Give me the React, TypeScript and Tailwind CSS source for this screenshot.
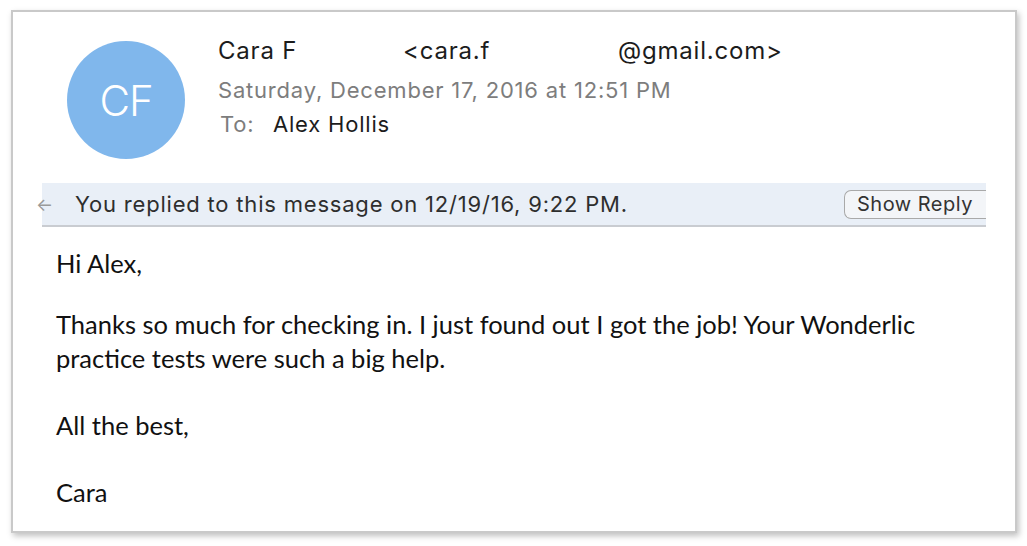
import React from 'react';

const head = { fontFamily: 'Inter, "Liberation Sans", Arial, sans-serif' };
const body = { fontFamily: 'Lato, "Open Sans", sans-serif' };

export default function App() {
  return (
    <div className="w-[1027px] h-[546px] bg-white overflow-hidden pt-[10px] pl-[11px]">
      <div className="relative w-[1006px] h-[523px] bg-white border-2 border-[#c9c9c9] shadow-[2px_3px_6px_rgba(0,0,0,0.25)]">
        {/* Header */}
        <div className="flex pl-[54px] pt-[29px]" style={head}>
          <div className="w-[118px] h-[118px] rounded-full bg-[#80b7ec] flex items-center justify-center text-white text-[42px] font-light tracking-tight">
            CF
          </div>
          <div className="ml-[33px] -mt-[5px] text-[#1c1c1c]">
            <div className="flex text-[24px] leading-[30px] tracking-[0.8px]">
              <span className="w-[185px]">Cara F</span>
              <span className="w-[215px]">&lt;cara.f</span>
              <span>@gmail.com&gt;</span>
            </div>
            <div className="text-[22px] leading-[29px] tracking-[0.8px] text-[#7d7d7d] mt-[10px]">
              Saturday, December 17, 2016 at 12:51 PM
            </div>
            <div className="text-[22px] leading-[29px] tracking-[0.8px] flex mt-[5px] pl-[2px]">
              <span className="text-[#7d7d7d] w-[53px]">To:</span>
              <span>Alex Hollis</span>
            </div>
          </div>
        </div>

        {/* Replied banner */}
        <div
          className="mt-[24px] ml-[29px] w-[944px] h-[44px] bg-[#e9eff7] border-b-2 border-[#c9ccd1] flex items-center"
          style={head}
        >
          <span className="text-[#9a9a9a] text-[18px] w-[39px] -ml-[6px]">&larr;</span>
          <span className="text-[22px] tracking-[0.8px] text-[#2e2e2e]">You replied to this message on 12/19/16, 9:22 PM.</span>
          <div className="ml-auto h-[29px] w-[142px] rounded-l-[7px] border border-r-0 border-[#a9a9a9] bg-[#f3f5f8] flex items-center pl-[12px] text-[20px] tracking-[0.5px] text-[#333]">
            Show Reply
          </div>
        </div>

        {/* Body */}
        <div className="pl-[43px] pt-[20px] text-[25.5px] leading-[33.5px] text-[#111]" style={body}>
          <div>Hi Alex,</div>
          <div className="h-[27.5px]" />
          <div>Thanks so much for checking in. I just found out I got the job! Your Wonderlic</div>
          <div>practice tests were such a big help.</div>
          <div className="h-[33.5px]" />
          <div>All the best,</div>
          <div className="h-[33.5px]" />
          <div>Cara</div>
        </div>
      </div>
    </div>
  );
}
